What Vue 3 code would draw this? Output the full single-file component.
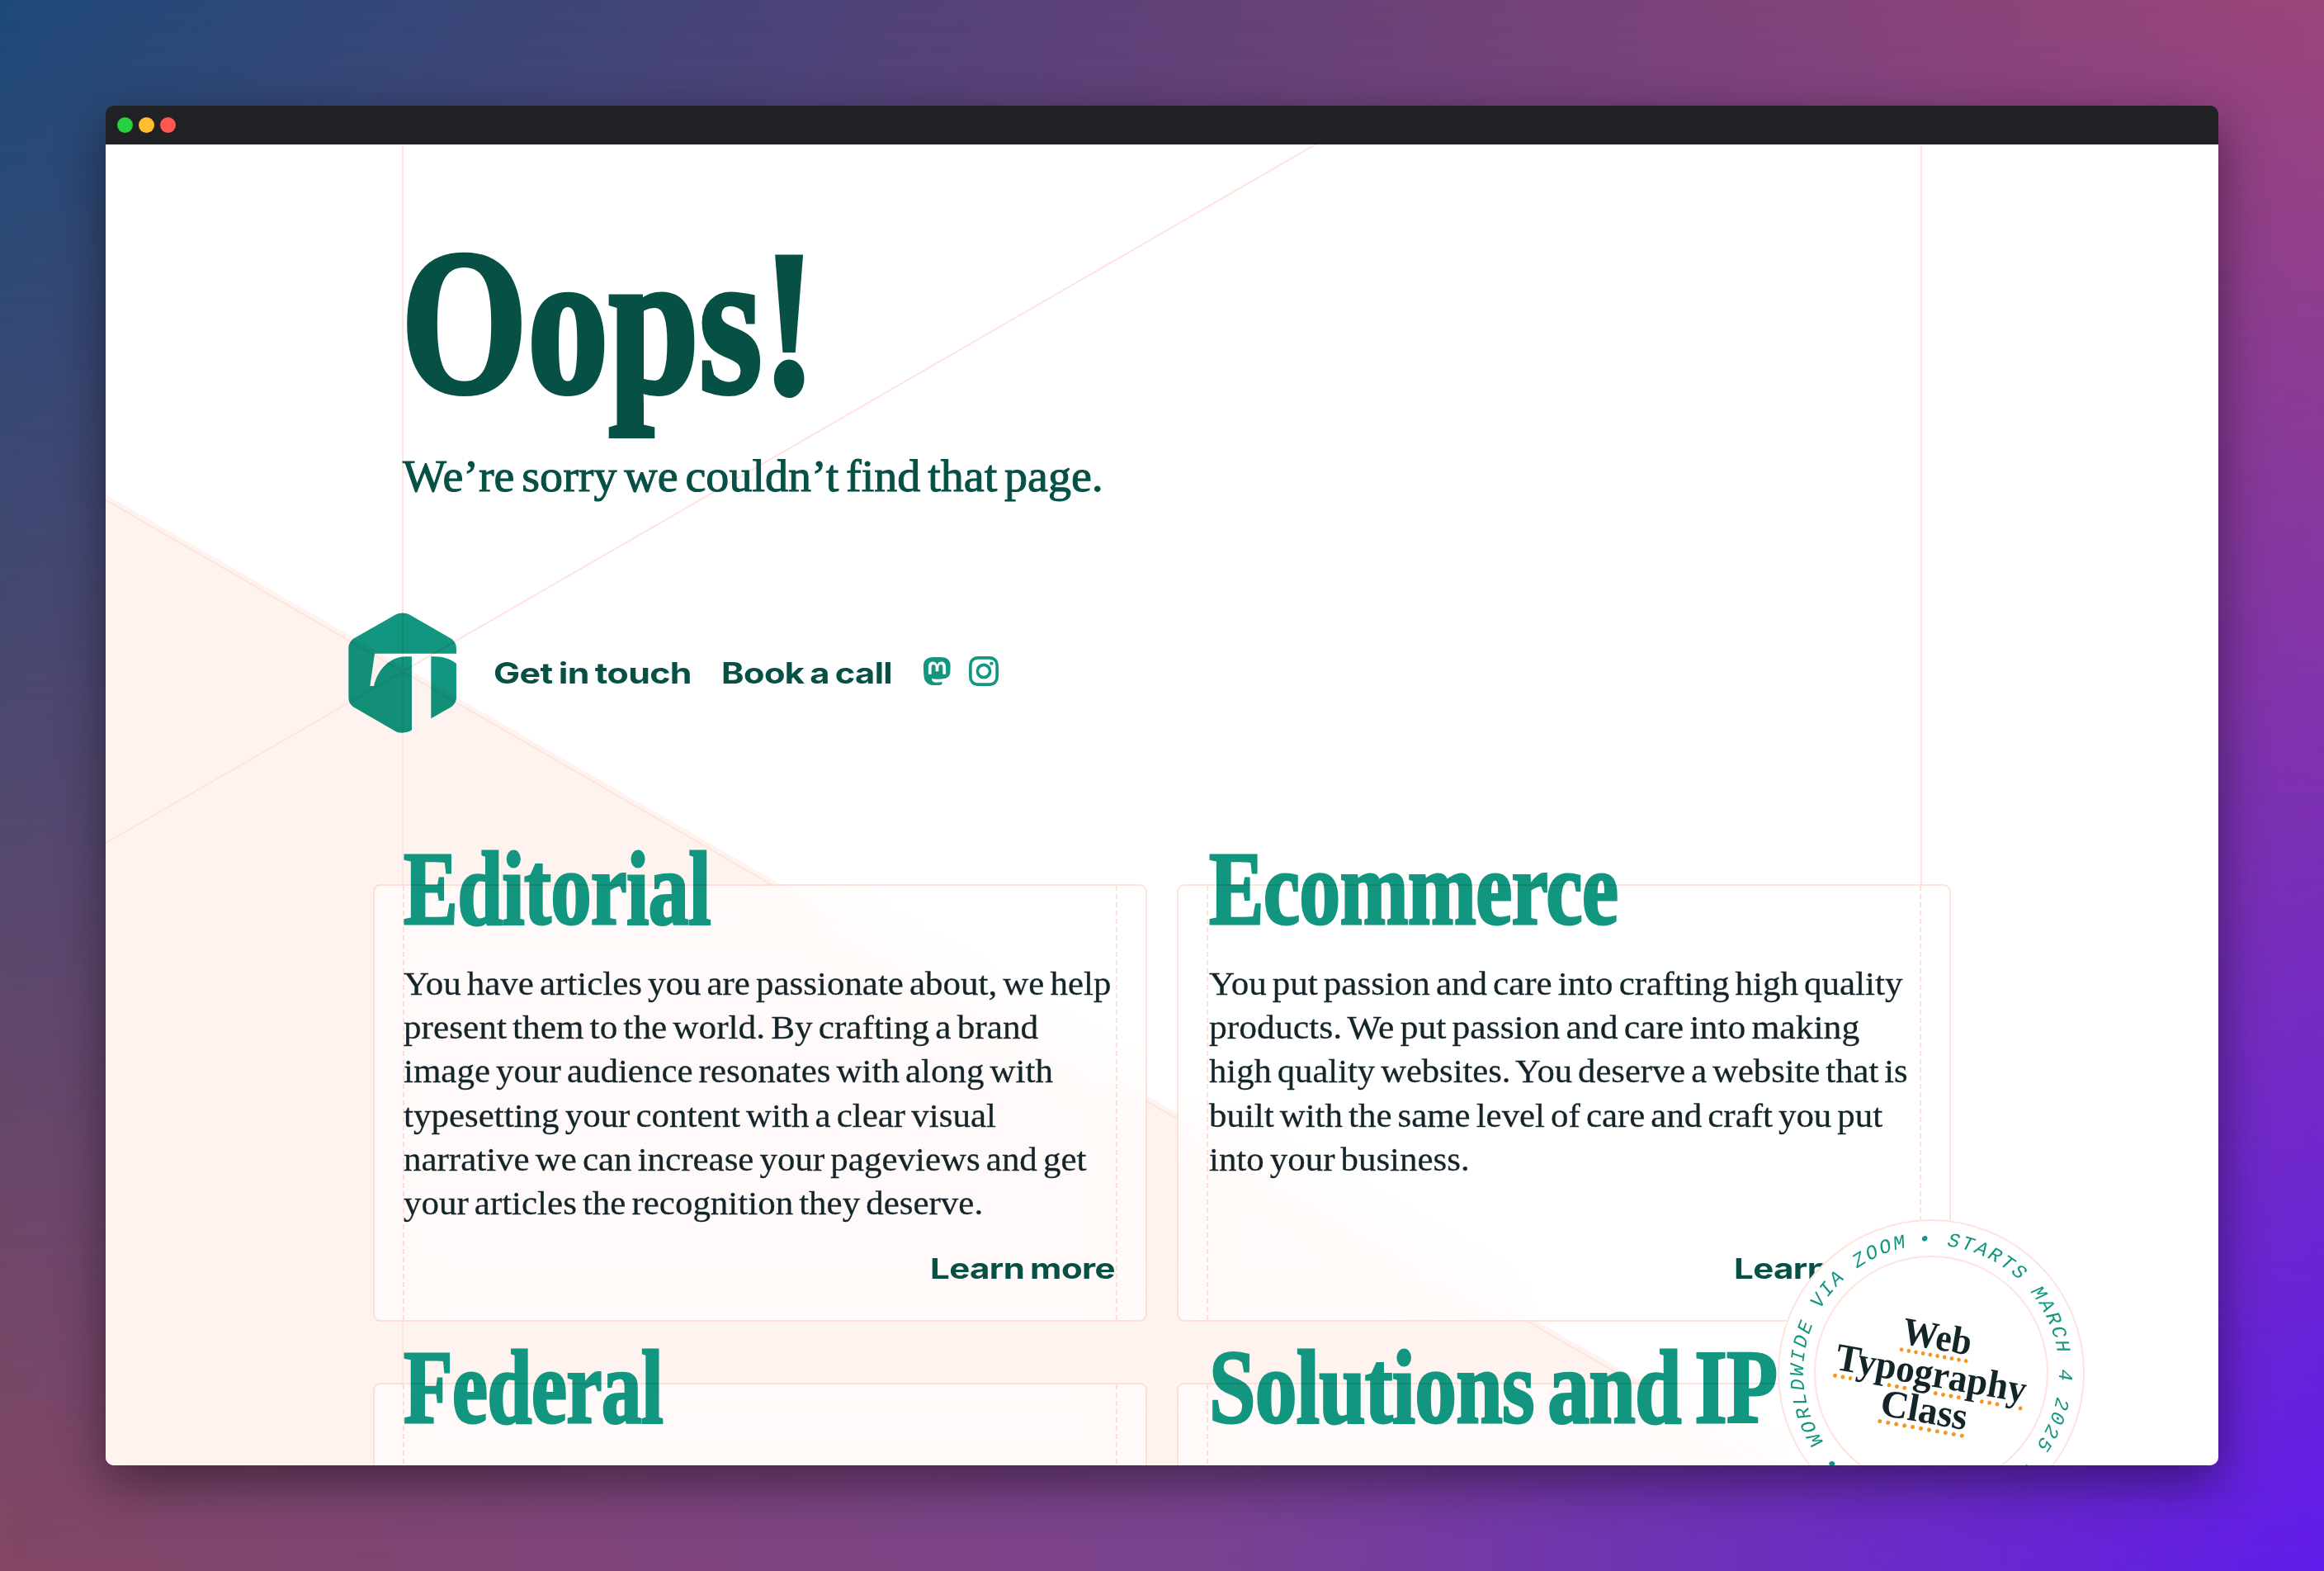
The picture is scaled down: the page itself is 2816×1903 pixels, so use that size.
<script setup>
// Squeezes or stretches a line of type to the measure given in pixels.
const vFit = {
  mounted(el, { value }) {
    el.style.transform = `scaleX(${value / el.offsetWidth})`
  },
}

const cards = [
  {
    title: 'Editorial',
    width: 372,
    lines: [
      ['You have articles you are passionate about, we help', 857],
      ['present them to the world. By crafting a brand', 769],
      ['image your audience resonates with along with', 787],
      ['typesetting your content with a clear visual', 718],
      ['narrative we can increase your pageviews and get', 827],
      ['your articles the recognition they deserve.', 702],
    ],
  },
  {
    title: 'Ecommerce',
    width: 495,
    lines: [
      ['You put passion and care into crafting high quality', 840],
      ['products. We put passion and care into making', 788],
      ['high quality websites. You deserve a website that is', 847],
      ['built with the same level of care and craft you put', 816],
      ['into your business.', 316],
    ],
  },
  { title: 'Federal', width: 314, lines: [] },
  { title: 'Solutions and IP', width: 688, lines: [] },
]

const badgeLines = [
  ['Web', 84],
  ['Typography', 234],
  ['Class', 106],
]
</script>

<template>
  <div class="desktop">
    <div class="window">
      <header class="titlebar">
        <i class="dot green"></i>
        <i class="dot yellow"></i>
        <i class="dot red"></i>
      </header>

      <main class="page">
        <svg class="guides" viewBox="0 0 2560 1600" aria-hidden="true">
          <path class="wedge" d="M0 424 L2037 1600 H0 Z" />
          <path class="guide" d="M360 0 V1600 M2200 0 V1600" />
          <path class="guide" d="M0 430.7 L2025 1600" />
          <path class="guide" d="M0 846.3 L1466 0" />
        </svg>

        <h1 class="oops"><span v-fit="503" class="fit">Oops!</span></h1>
        <p class="sorry"><span v-fit="849" class="fit">We’re sorry we couldn’t find that page.</span></p>

        <nav class="nav">
          <svg class="logo" viewBox="30 28 394 438" aria-hidden="true">
            <path d="M126 177 L109 295 H123 C140 225 190 188 240 188 H261 V455 C245 467 214 468 201 459 L52 373 C39 366 31 352 31 337 V157 C31 142 39 129 52 121 L201 36 C218 27 236 27 254 36 L401 121 C415 129 423 142 423 157 V177 Z" />
            <path d="M331 188 H345 C375 188 400 197 423 213 V337 C423 352 415 365 401 373 L331 413 Z" />
          </svg>
          <a class="link touch"><span v-fit="240" class="fit">Get in touch</span></a>
          <a class="link call"><span v-fit="207" class="fit">Book a call</span></a>
          <svg class="icon mastodon" viewBox="0 0 24 24" aria-hidden="true">
            <path d="M23.268 5.313c-.35-2.578-2.617-4.61-5.304-5.004C17.51.242 15.792 0 11.813 0h-.03c-3.98 0-4.835.242-5.288.309C3.882.692 1.496 2.518.917 5.127.64 6.412.61 7.837.661 9.143c.074 1.874.088 3.745.26 5.611.118 1.24.325 2.47.62 3.68.55 2.237 2.777 4.098 4.96 4.857 2.336.792 4.849.923 7.256.38.265-.061.527-.132.786-.213.585-.184 1.27-.39 1.774-.753a.057.057 0 0 0 .023-.043v-1.809a.052.052 0 0 0-.02-.041.053.053 0 0 0-.046-.01 20.282 20.282 0 0 1-4.709.545c-2.73 0-3.463-1.284-3.674-1.818a5.593 5.593 0 0 1-.319-1.433.053.053 0 0 1 .066-.054c1.517.363 3.072.546 4.632.546.376 0 .75 0 1.125-.01 1.57-.044 3.224-.124 4.768-.422.038-.008.077-.015.11-.024 2.435-.464 4.753-1.92 4.989-5.604.008-.145.03-1.52.03-1.67.002-.512.167-3.63-.024-5.545zm-3.748 9.195h-2.561V8.29c0-1.309-.55-1.976-1.67-1.976-1.23 0-1.846.79-1.846 2.35v3.403h-2.546V8.663c0-1.56-.617-2.35-1.848-2.35-1.112 0-1.668.668-1.67 1.977v6.218H4.822V8.102c0-1.31.337-2.35 1.011-3.12.696-.77 1.608-1.164 2.74-1.164 1.311 0 2.302.5 2.962 1.498l.638 1.06.638-1.06c.66-.999 1.65-1.498 2.96-1.498 1.13 0 2.043.395 2.74 1.164.675.77 1.012 1.81 1.012 3.12z" />
          </svg>
          <svg class="icon instagram" viewBox="0 0 36 36" aria-hidden="true">
            <rect x="1.9" y="1.9" width="32.2" height="32.2" rx="8.5" />
            <circle cx="18" cy="18" r="7.6" />
            <circle class="lens" cx="27.4" cy="8.6" r="2.2" />
          </svg>
        </nav>

        <section class="cards">
          <article v-for="card in cards" :key="card.title" class="card">
            <h2><span v-fit="card.width" class="fit">{{ card.title }}</span></h2>
            <p v-if="card.lines.length" class="copy">
              <span v-for="[line, width] in card.lines" :key="line" class="line">
                <span v-fit="width" class="fit">{{ line }}</span>
              </span>
            </p>
            <a v-if="card.lines.length" class="link more"><span v-fit="224" class="fit right">Learn more</span></a>
          </article>
        </section>

        <aside class="badge">
          <svg class="ring" viewBox="-186 -186 372 372" aria-hidden="true">
            <defs>
              <path id="orbit" d="M0 -155 A155 155 0 0 1 0 155 A155 155 0 0 1 0 -155" />
            </defs>
            <circle r="185" />
            <circle r="141" />
            <text transform="rotate(-5.5)"><textPath href="#orbit">• STARTS MARCH 4 2025 •</textPath></text>
            <text transform="rotate(-135.3)"><textPath href="#orbit">• WORLDWIDE VIA ZOOM</textPath></text>
          </svg>
          <div class="course">
            <span v-for="[line, width] in badgeLines" :key="line" class="row">
              <span v-fit="width" class="fit center">{{ line }}</span>
            </span>
          </div>
        </aside>
      </main>
    </div>
  </div>
</template>

<style>
body {
  margin: 0;
}
</style>

<style scoped>
.desktop {
  position: relative;
  box-sizing: border-box;
  width: 2816px;
  height: 1903px;
  padding: 128px;
  overflow: hidden;
  background: linear-gradient(90deg, #1e4a79, #5e4178 48%, #9c467a);
}

.desktop::before {
  content: '';
  position: absolute;
  inset: 0;
  background: linear-gradient(90deg, #844664, #7a4290 52%, #5f1ceb);
  mask-image: linear-gradient(transparent, #000);
}

.window {
  position: relative;
  display: flex;
  flex-direction: column;
  width: 2560px;
  height: 1647px;
  border-radius: 10px;
  box-shadow: 0 20px 60px rgba(0, 0, 0, 0.45);
  overflow: hidden;
}

.titlebar {
  display: flex;
  align-items: center;
  gap: 7px;
  height: 47px;
  padding-left: 14px;
  background: #202124;
}

.dot {
  width: 19px;
  height: 19px;
  border-radius: 50%;
}
.green { background: #28cf42; }
.yellow { background: #ffbe30; }
.red { background: #ff5650; }

.page {
  position: relative;
  box-sizing: border-box;
  height: 1600px;
  padding: 90.6px 324px 0;
  background: #fff;
  color: #075046;
  font-family: 'Liberation Serif', serif;
  overflow: hidden;
}

.guides {
  position: absolute;
  top: 0;
  left: 0;
  width: 2560px;
  height: 1600px;
}
.wedge { fill: #fff3ef; }
.guide {
  fill: none;
  stroke: #ffe3dd;
  stroke-width: 2;
}

.fit {
  display: inline-block;
  white-space: nowrap;
  transform-origin: 0 50%;
}
.fit.right { transform-origin: 100% 50%; }
.fit.center { transform-origin: 50% 50%; }

h1,
h2,
p {
  position: relative;
  margin: 0;
}

.oops {
  padding-left: 34px;
  font-size: 250px;
  line-height: 250px;
  letter-spacing: 0;
  -webkit-text-stroke: 6px #075046;
}

.sorry {
  margin-top: 31.7px;
  padding-left: 36px;
  font-size: 54px;
  line-height: 60px;
  word-spacing: -5px;
  -webkit-text-stroke: 1px #075046;
}

.nav {
  display: flex;
  align-items: center;
  height: 146px;
  margin-top: 134.5px;
  margin-left: -30px;
  mix-blend-mode: multiply;
}

.logo {
  width: 131.3px;
  height: 146px;
  fill: #139680;
}

.link {
  font-family: Inter, sans-serif;
  font-size: 35px;
  font-weight: 700;
  line-height: 40px;
  letter-spacing: -0.5px;
  word-spacing: -2px;
}
.touch {
  width: 239px;
  margin-left: 44.7px;
}
.call {
  width: 207px;
  margin-left: 37px;
}

.icon {
  fill: #139680;
}
.mastodon {
  width: 34.5px;
  height: 34.5px;
  margin: -4px 0 0 37.5px;
}
.instagram {
  width: 36px;
  height: 36px;
  margin: -3px 0 0 21px;
  fill: none;
  stroke: #139680;
  stroke-width: 3.6;
}
.instagram .lens {
  fill: #139680;
  stroke: none;
}

.cards {
  display: grid;
  grid-template-columns: 938px 938px;
  grid-auto-rows: 530px;
  column-gap: 36px;
  row-gap: 74px;
  margin-top: 183.5px;
}

.card {
  position: relative;
  box-sizing: border-box;
  display: flex;
  flex-direction: column;
  padding: 0 38.5px 44.4px 37px;
}
.card:nth-child(even) {
  padding-left: 38.5px;
}
.card::before {
  content: '';
  position: absolute;
  inset: 0;
  border-radius: 9px;
  background: rgba(255, 255, 255, 0.6);
  backdrop-filter: blur(36px);
}
.card::after {
  content: '';
  position: absolute;
  inset: 0;
  border: 2px solid #ffe3dd;
  border-radius: 9px;
  background:
    repeating-linear-gradient(#ffe3dd 0 6px, transparent 6px 10px) 34px 0 / 2px 100% no-repeat,
    repeating-linear-gradient(#ffe3dd 0 6px, transparent 6px 10px) calc(100% - 34px) 0 / 2px 100% no-repeat;
  mix-blend-mode: multiply;
}

.card h2 {
  margin-top: -58.4px;
  color: #139680;
  font-size: 127px;
  line-height: 127px;
  letter-spacing: -1px;
  word-spacing: -10px;
  -webkit-text-stroke: 3px #139680;
}

.copy {
  z-index: 1;
  margin-top: 24.9px;
  color: #14252a;
  font-size: 41px;
  line-height: 53.3px;
  word-spacing: -3.5px;
  -webkit-text-stroke: 0.3px #14252a;
}
.line {
  display: block;
  height: 53.3px;
}

.more {
  position: relative;
  z-index: 1;
  margin-top: auto;
  text-align: right;
  font-size: 34px;
}

.badge {
  position: absolute;
  top: 1302px;
  left: 2026.4px;
  z-index: 2;
  width: 372px;
  height: 372px;
  border-radius: 50%;
  background: #fff;
}
.ring circle {
  fill: none;
  stroke: #ffe3dd;
  stroke-width: 2;
}
.ring text {
  fill: #139680;
  font-family: 'Liberation Mono', monospace;
  font-size: 24px;
  font-style: italic;
  letter-spacing: 2.5px;
}

.course {
  position: absolute;
  inset: 0;
  display: flex;
  flex-direction: column;
  align-items: center;
  justify-content: center;
  color: #14252a;
  font-size: 47px;
  font-weight: 700;
  line-height: 45px;
  transform: rotate(10deg);
}
.row {
  height: 45px;
}
.row .fit {
  text-decoration: underline dotted #f7951d 5px;
  text-underline-offset: 5px;
}
</style>
